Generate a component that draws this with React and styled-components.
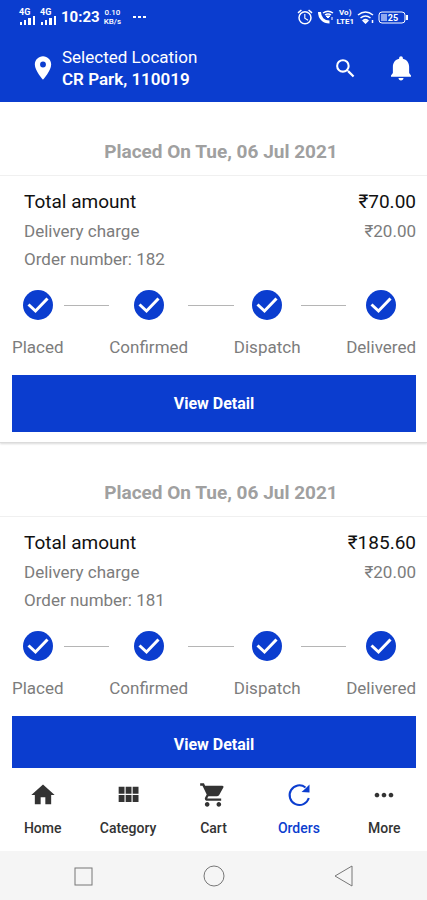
import React from "react";
import styled, { createGlobalStyle } from "styled-components";

const blue = "#0b3dcf";

const GlobalStyle = createGlobalStyle`
  *, *::before, *::after { box-sizing: border-box; }
  body { margin: 0; background: #fff; font-family: Roboto, "Noto Sans", sans-serif; }
  button { font: inherit; border: 0; padding: 0; background: none; cursor: pointer; }
  svg { display: block; flex: none; }
`;

const Screen = styled.div`
  display: flex;
  flex-direction: column;
  height: 100vh;
  overflow: hidden;
`;

const Header = styled.header`
  background: ${blue};
  color: #fff;
  flex: none;
`;

const StatusBar = styled.div`
  display: flex;
  align-items: center;
  justify-content: space-between;
  height: 34px;
  padding: 0 18px 0 19px;
`;

const StatusGroup = styled.div`
  display: flex;
  align-items: center;
  gap: ${(p) => p.$gap}px;
`;

const Signal = styled.div`
  display: flex;
  flex-direction: column;
  font-size: 9px;
  font-weight: 700;
  line-height: 7px;
`;

const Clock = styled.span`
  font-size: 15px;
  font-weight: 700;
  line-height: 20px;
`;

const Tiny = styled.span`
  display: flex;
  flex-direction: column;
  font-size: 8px;
  font-weight: ${(p) => p.$weight || 700};
  line-height: 9px;
  text-align: center;
`;

const LocationBar = styled.div`
  display: flex;
  align-items: center;
  height: 68px;
  padding: 0 11px 0 29px;
`;

const Location = styled.button`
  display: flex;
  align-items: center;
  gap: 5px;
  color: #fff;
  text-align: left;
  margin-right: auto;
`;

const LocationText = styled.span`
  display: flex;
  flex-direction: column;
  font-size: 17px;
  line-height: 22px;
  strong { font-weight: 600; }
`;

const IconButton = styled.button`
  color: #fff;
  margin-left: 28px;
`;

const OrderList = styled.main`
  flex: 1;
  min-height: 0;
  overflow-y: auto;
  scrollbar-width: none;
`;

const Card = styled.article`
  padding: 38px 0 10px;
  border-bottom: 1px solid #ddd;
  box-shadow: 0 1px 2px rgba(0, 0, 0, 0.15);
`;

const PlacedOn = styled.h2`
  margin: 0;
  padding: 0 0 11px 15px;
  border-bottom: 1px solid #f0f0f0;
  color: #a0a0a0;
  font-size: 19px;
  font-weight: 700;
  line-height: 24px;
  text-align: center;
`;

const Summary = styled.dl`
  margin: 0;
  padding: 12px 11px 0 24px;
`;

const SummaryRow = styled.div`
  display: flex;
  justify-content: space-between;
  color: ${(p) => (p.$strong ? "#111" : "#7c7c7c")};
  font-size: ${(p) => (p.$strong ? 19 : 17)}px;
  line-height: 28px;
  margin-bottom: ${(p) => (p.$strong ? 1 : 0)}px;
  dd { margin: 0; }
`;

const Steps = styled.ol`
  display: flex;
  margin: 0;
  padding: 16px 11px 0 12px;
  list-style: none;
`;

const Step = styled.li`
  display: flex;
  flex-direction: column;
  align-items: center;
  gap: 16px;
  color: #7c7c7c;
  font-size: 17px;
  line-height: 20px;
`;

const StepLine = styled.li`
  flex: 1;
  height: 1px;
  margin-top: 16px;
  background: #b5b5b5;
`;

const DetailButton = styled.button`
  && {
    display: block;
    width: calc(100% - 23px);
    height: 57px;
    margin: 18px 11px 0 12px;
    background: ${blue};
    color: #fff;
    font-size: 16px;
    font-weight: 700;
  }
`;

const TabBar = styled.nav`
  display: grid;
  grid-template-columns: repeat(5, 1fr);
  flex: none;
  height: 83px;
  background: #fff;
`;

const Tab = styled.a`
  display: flex;
  flex-direction: column;
  align-items: center;
  gap: 9px;
  padding-top: 13px;
  color: ${(p) => (p.$active ? blue : "#333")};
  font-size: 14px;
  font-weight: 500;
  line-height: 20px;
  text-decoration: none;
`;

const SystemBar = styled.div`
  display: flex;
  align-items: center;
  justify-content: space-between;
  flex: none;
  height: 49px;
  padding: 0 71px;
  background: #f5f5f5;
  color: #777;
`;

const Icon = ({ d, size = 24, children }) => (
  <svg width={size} height={size} viewBox="0 0 24 24" fill="currentColor" aria-hidden="true">
    {d ? <path d={d} /> : children}
  </svg>
);

const paths = {
  pin: "M12 2C8.13 2 5 5.13 5 9c0 5.25 7 13 7 13s7-7.75 7-13c0-3.87-3.13-7-7-7zm0 9.5a2.5 2.5 0 0 1 0-5 2.5 2.5 0 0 1 0 5z",
  search:
    "M15.5 14h-.79l-.28-.27A6.47 6.47 0 0 0 16 9.5 6.5 6.5 0 1 0 9.5 16c1.61 0 3.09-.59 4.23-1.57l.27.28v.79l5 4.99L20.49 19l-4.99-5zm-6 0C7.01 14 5 11.99 5 9.5S7.01 5 9.5 5 14 7.01 14 9.5 11.99 14 9.5 14z",
  bell: "M12 22c1.1 0 2-.9 2-2h-4c0 1.1.89 2 2 2zm6.500-6v-5c0-3.07-1.900-5.640-5-6.320V4c0-.83-.67-1.500-1.500-1.500s-1.500.67-1.500 1.500v.68C7.400 5.360 5.500 7.920 5.500 11v5l-1.500 2v1h16v-1z",
  home: "M10 20v-6h4v6h5v-8h3L12 3 2 12h3v8z",
  grid: "M4 11h5V5H4v6zm0 7h5v-6H4v6zm6 0h5v-6h-5v6zm6 0h5v-6h-5v6zm-6-7h5V5h-5v6zm6-6v6h5V5h-5z",
  cart: "M7 18c-1.1 0-1.99.9-1.99 2S5.9 22 7 22s2-.9 2-2-.9-2-2-2zM1 2v2h2l3.6 7.59-1.35 2.45c-.16.28-.25.61-.25.96 0 1.1.9 2 2 2h12v-2H7.42c-.14 0-.25-.11-.25-.25l.03-.12.9-1.63h7.45c.75 0 1.41-.41 1.75-1.03l3.58-6.49A1 1 0 0 0 20 4H5.21l-.94-2H1zm16 16c-1.1 0-1.99.9-1.99 2s.89 2 1.99 2 2-.9 2-2-.9-2-2-2z",
  more: "M6 10c-1.1 0-2 .9-2 2s.9 2 2 2 2-.9 2-2-.9-2-2-2zm12 0c-1.1 0-2 .9-2 2s.9 2 2 2 2-.9 2-2-.9-2-2-2zm-6 0c-1.1 0-2 .9-2 2s.9 2 2 2 2-.9 2-2-.9-2-2-2z",
  alarm:
    "M22 5.72l-4.6-3.86-1.29 1.53 4.6 3.86L22 5.72zM7.88 3.39L6.6 1.86 2 5.71l1.29 1.53 4.59-3.85zM12.5 8H11v6l4.75 2.85.75-1.23-4-2.37V8zM12 4a9 9 0 1 0 0 18 9 9 0 0 0 0-18zm0 16a7 7 0 1 1 0-14 7 7 0 0 1 0 14z",
};

const SignalBars = () => (
  <Signal>
    <span>4G</span>
    <svg width="17" height="9" viewBox="0 0 17 9" fill="currentColor" aria-hidden="true">
      <path d="M1 6h2v3H1zM5 4h2v5H5zM9 2h3v7H9zM14 0h2v9h-2z" />
    </svg>
  </Signal>
);

const CallIcon = () => (
  <svg width="17" height="16" viewBox="0 0 17 16" fill="none" stroke="currentColor" aria-hidden="true">
    <path d="M2.500 3c0 6 4 10 10 10" strokeWidth="3" />
    <path d="M6 4q5-3.500 10 0M8 6q3-2 6 0" strokeWidth="1.500" />
    <path d="M9 7h4l-2 2zM15 8v3" fill="currentColor" />
  </svg>
);

const WifiIcon = () => (
  <svg width="18" height="14" viewBox="0 0 18 14" fill="none" stroke="currentColor" strokeWidth="1.5" aria-hidden="true">
    <path d="M1 5q7.500-6 15 0M3.500 8q5-4 10 0M6 10.500q2.500-2 5 0" />
    <path d="M8.500 13l-2-2h4zM15.500 10v3" />
  </svg>
);

const BatteryIcon = () => (
  <svg width="31" height="13" viewBox="0 0 31 13" fill="none" aria-hidden="true">
    <rect x="1" y="1" width="26" height="11" rx="3" stroke="currentColor" />
    <rect x="3" y="3" width="6" height="7" fill="#8fa8f0" />
    <path d="M29 4v5" stroke="currentColor" strokeWidth="2" />
    <text x="15" y="10" fill="currentColor" fontSize="9" fontWeight="700" textAnchor="middle">25</text>
  </svg>
);

const CheckIcon = () => (
  <svg width="32" height="32" viewBox="0 0 32 32" aria-hidden="true">
    <circle cx="16" cy="16" r="15" fill={blue} />
    <path d="M6.500 15.500l7 6.500L25.500 9.500" fill="none" stroke="#fff" strokeWidth="3" />
  </svg>
);

const ReloadIcon = () => (
  <svg width="28" height="28" viewBox="0 0 28 28" fill="none" aria-hidden="true">
    <path d="M23.800 17A9.800 9.800 0 1 1 20.500 6.500" stroke="currentColor" strokeWidth="2" />
    <path d="M24.500 3.500v8l-8-.5 4-3.500z" fill="currentColor" />
  </svg>
);

const tabs = [
  { label: "Home", icon: <Icon d={paths.home} size={28} /> },
  { label: "Category", icon: <Icon d={paths.grid} size={28} /> },
  { label: "Cart", icon: <Icon d={paths.cart} size={28} /> },
  { label: "Orders", icon: <ReloadIcon />, active: true },
  { label: "More", icon: <Icon d={paths.more} size={28} /> },
];

const orders = [
  { number: 182, total: "₹70.00", delivery: "₹20.00", date: "Tue, 06 Jul 2021" },
  { number: 181, total: "₹185.60", delivery: "₹20.00", date: "Tue, 06 Jul 2021" },
];

const stages = ["Placed", "Confirmed", "Dispatch", "Delivered"];

const Order = ({ order }) => (
  <Card>
    <PlacedOn>Placed On {order.date}</PlacedOn>
    <Summary>
      <SummaryRow $strong>
        <dt>Total amount</dt>
        <dd>{order.total}</dd>
      </SummaryRow>
      <SummaryRow>
        <dt>Delivery charge</dt>
        <dd>{order.delivery}</dd>
      </SummaryRow>
      <SummaryRow>
        <dt>Order number: {order.number}</dt>
      </SummaryRow>
    </Summary>
    <Steps>
      {stages.map((stage, i) => (
        <React.Fragment key={stage}>
          {i > 0 && <StepLine aria-hidden="true" />}
          <Step>
            <CheckIcon />
            {stage}
          </Step>
        </React.Fragment>
      ))}
    </Steps>
    <DetailButton type="button">View Detail</DetailButton>
  </Card>
);

export default function App() {
  return (
    <Screen>
      <GlobalStyle />
      <Header>
        <StatusBar>
          <StatusGroup $gap={4}>
            <SignalBars />
            <SignalBars />
            <Clock>10:23</Clock>
            <Tiny $weight={500}>
              <span>0.10</span>
              <span>KB/s</span>
            </Tiny>
            <Icon size={24}>
              <path d="M8 11h3v2H8zM13 11h3v2h-3zM18 11h3v2h-3z" />
            </Icon>
          </StatusGroup>
          <StatusGroup $gap={3}>
            <Icon d={paths.alarm} size={18} />
            <CallIcon />
            <Tiny>
              <span>Vo)</span>
              <span>LTE1</span>
            </Tiny>
            <WifiIcon />
            <BatteryIcon />
          </StatusGroup>
        </StatusBar>
        <LocationBar>
          <Location type="button">
            <Icon d={paths.pin} size={28} />
            <LocationText>
              <span>Selected Location</span>
              <strong>CR Park, 110019</strong>
            </LocationText>
          </Location>
          <IconButton type="button" aria-label="Search">
            <Icon d={paths.search} size={25} />
          </IconButton>
          <IconButton type="button" aria-label="Notifications">
            <Icon d={paths.bell} size={30} />
          </IconButton>
        </LocationBar>
      </Header>
      <OrderList>
        {orders.map((order) => (
          <Order key={order.number} order={order} />
        ))}
      </OrderList>
      <TabBar aria-label="Main">
        {tabs.map((tab) => (
          <Tab key={tab.label} href="#" $active={tab.active} aria-current={tab.active ? "page" : undefined}>
            {tab.icon}
            {tab.label}
          </Tab>
        ))}
      </TabBar>
      <SystemBar>
        <Icon size={24}>
          <rect x="4" y="4" width="17" height="17" fill="none" stroke="currentColor" />
        </Icon>
        <Icon size={24}>
          <circle cx="12" cy="12" r="10" fill="none" stroke="currentColor" />
        </Icon>
        <Icon size={24}>
          <path d="M20 2v20L3 12z" fill="none" stroke="currentColor" />
        </Icon>
      </SystemBar>
    </Screen>
  );
}
